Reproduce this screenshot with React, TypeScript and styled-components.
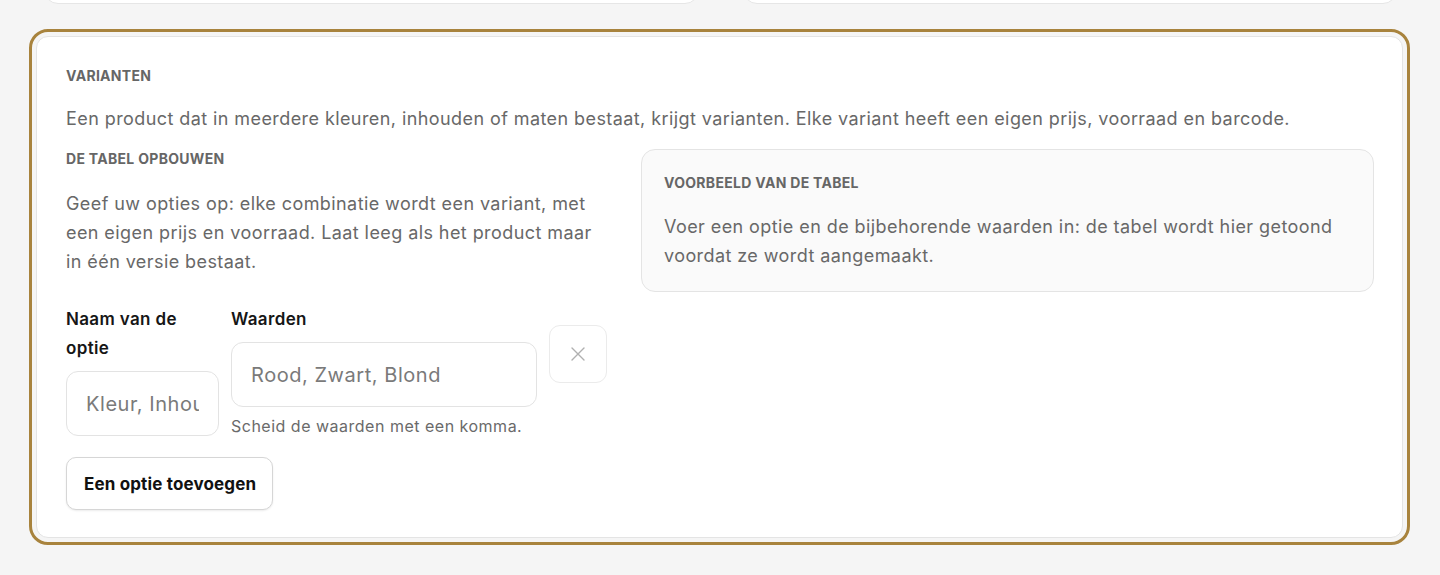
import React from "react";
import styled, { createGlobalStyle } from "styled-components";

const Global = createGlobalStyle`
  html, body { margin: 0; padding: 0; background: #f5f5f5; }
  body { font-family: Inter, "Noto Sans", sans-serif; -webkit-font-smoothing: antialiased; }
  * { box-sizing: border-box; }
`;

const Page = styled.div`
  width: 1440px;
  height: 575px;
  overflow: hidden;
  padding: 0 37px 0 36px;
`;

const TopRow = styled.div`
  display: grid;
  grid-template-columns: 1fr 1fr;
  gap: 44px;
  padding: 0 6px 0 8px;
  margin-top: -40px;
`;

const StubCard = styled.div`
  height: 44px;
  background: #fff;
  border: 1px solid #e6e6e6;
  border-radius: 14px;
`;

const Card = styled.section`
  margin-top: 32px;
  background: #fff;
  border: 1px solid #e4e4e4;
  border-radius: 12px;
  outline: 3px solid #a8833d;
  outline-offset: 4px;
  padding: 29px 28px 27px 29px;
`;

const Eyebrow = styled.h3`
  margin: 0;
  font-size: 14px;
  line-height: 20px;
  font-weight: 700;
  color: #666;
  letter-spacing: 0.3px;
  text-transform: uppercase;
`;

const Body = styled.p`
  margin: 0;
  font-size: 18px;
  line-height: 29px;
  letter-spacing: 0.42px;
  color: #686868;
`;

const Intro = styled(Body)`
  margin-top: 18px;
`;

const Columns = styled.div`
  display: grid;
  grid-template-columns: 541px 1fr;
  gap: 34px;
  margin-top: 16px;
  align-items: start;
`;

const LeftCol = styled.div`
  display: flex;
  flex-direction: column;
`;

const LeftText = styled(Body)`
  margin-top: 20px;
`;

const Preview = styled.div`
  background: #fafafa;
  border: 1px solid #e4e4e4;
  border-radius: 14px;
  padding: 23px 22px 21px 22px;
  display: flex;
  flex-direction: column;
  gap: 19px;
`;

const OptionRow = styled.div`
  display: flex;
  gap: 12px;
  align-items: flex-start;
  margin-top: 29px;
`;

const Field = styled.div<{ $grow: number }>`
  flex: ${(p) => p.$grow} 1 0;
  min-width: 0;
  display: flex;
  flex-direction: column;
`;

const Label = styled.label`
  font-size: 17px;
  line-height: 29px;
  font-weight: 600;
  letter-spacing: 0.35px;
  color: #161616;
  margin-bottom: 8px;
`;

const Input = styled.input`
  width: 100%;
  height: 65px;
  border: 1px solid #e3e3e3;
  border-radius: 12px;
  background: #fff;
  padding: 0 19px;
  font-family: Inter, "Noto Sans", sans-serif;
  font-size: 20px;
  letter-spacing: 0.55px;
  color: #222;
  outline: none;
  &::placeholder { color: #7a7a7a; }
`;

const Hint = styled.span`
  margin-top: 8px;
  font-size: 16px;
  line-height: 22px;
  letter-spacing: 0.5px;
  color: #6a6a6a;
`;

const IconButton = styled.button`
  flex: 0 0 58px;
  width: 58px;
  height: 58px;
  margin-top: 20px;
  border: 1px solid #ebebeb;
  border-radius: 11px;
  background: #fff;
  display: flex;
  align-items: center;
  justify-content: center;
  padding: 0;
  color: #b0b0b0;
`;

const AddButton = styled.button`
  align-self: flex-start;
  margin-top: 20px;
  height: 53px;
  padding: 0 16px 0 17px;
  border: 1px solid #d6d6d6;
  border-radius: 10px;
  background: #fff;
  box-shadow: 0 1px 2px rgba(0, 0, 0, 0.08);
  font-family: Inter, "Noto Sans", sans-serif;
  font-size: 17px;
  letter-spacing: 0.15px;
  font-weight: 700;
  color: #111;
`;

export default function App() {
  return (
    <>
      <Global />
      <Page>
        <TopRow>
          <StubCard />
          <StubCard />
        </TopRow>
        <Card>
          <Eyebrow>Varianten</Eyebrow>
          <Intro>
            Een product dat in meerdere kleuren, inhouden of maten bestaat, krijgt varianten. Elke variant heeft een
            eigen prijs, voorraad en barcode.
          </Intro>
          <Columns>
            <LeftCol>
              <Eyebrow>De tabel opbouwen</Eyebrow>
              <LeftText>
                Geef uw opties op: elke combinatie wordt een variant, met een eigen prijs en voorraad. Laat leeg als
                het product maar in één versie bestaat.
              </LeftText>
              <OptionRow>
                <Field $grow={1}>
                  <Label>Naam van de optie</Label>
                  <Input placeholder="Kleur, Inhoud" />
                </Field>
                <Field $grow={2}>
                  <Label>Waarden</Label>
                  <Input placeholder="Rood, Zwart, Blond" />
                  <Hint>Scheid de waarden met een komma.</Hint>
                </Field>
                <IconButton aria-label="Verwijderen">
                  <svg width="16" height="16" viewBox="0 0 16 16" fill="none" stroke="currentColor" strokeWidth="1.4" strokeLinecap="round">
                    <path d="M2 2 L14 14 M14 2 L2 14" />
                  </svg>
                </IconButton>
              </OptionRow>
              <AddButton>Een optie toevoegen</AddButton>
            </LeftCol>
            <Preview>
              <Eyebrow>Voorbeeld van de tabel</Eyebrow>
              <Body>
                Voer een optie en de bijbehorende waarden in: de tabel wordt hier getoond voordat ze wordt
                aangemaakt.
              </Body>
            </Preview>
          </Columns>
        </Card>
      </Page>
    </>
  );
}
